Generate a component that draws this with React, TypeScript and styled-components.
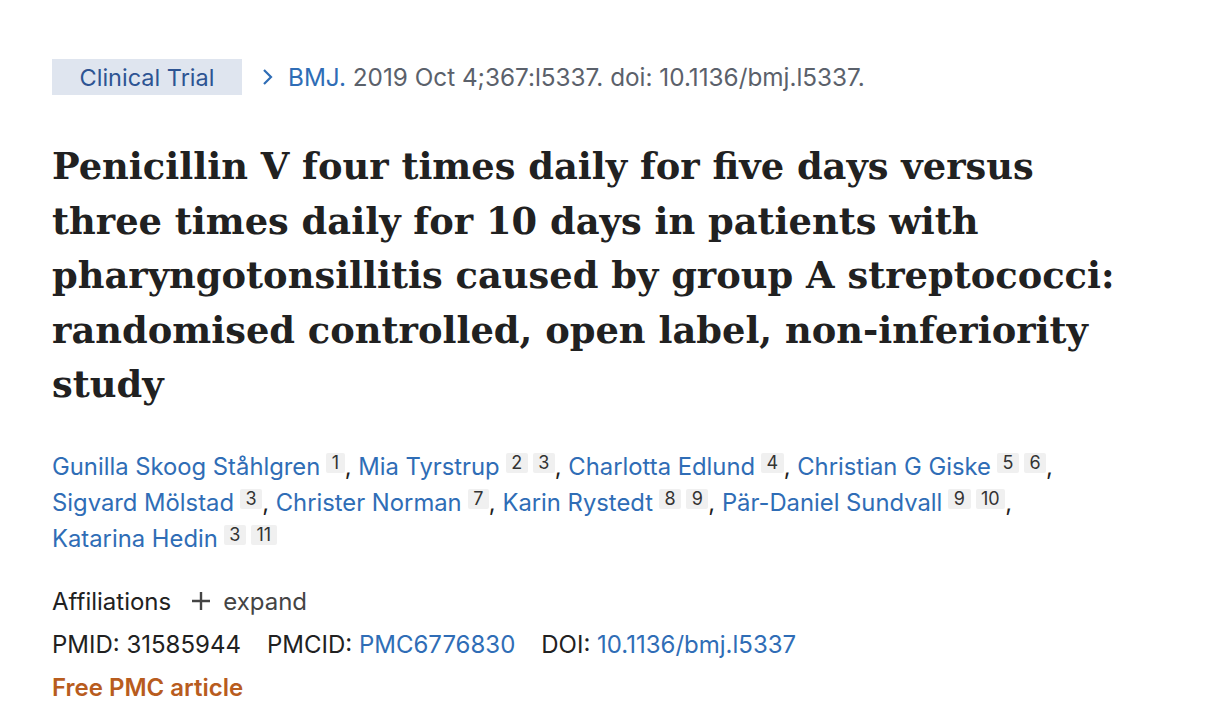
import React from "react";
import styled, { createGlobalStyle } from "styled-components";

const GlobalStyle = createGlobalStyle`
  body {
    margin: 0;
    background: #fff;
    font-family: Inter, "Noto Sans", sans-serif;
  }
`;

const Page = styled.div`
  padding: 59px 52px 0 52px;
  color: #212121;
`;

const HeadRow = styled.div`
  display: flex;
  align-items: center;
  gap: 20px;
  height: 36px;
`;

const Badge = styled.span`
  display: inline-flex;
  align-items: center;
  justify-content: center;
  width: 190px;
  height: 36px;
  background: #dfe5ef;
  color: #2d5493;
  font-size: 23.5px;
`;

const Citation = styled.div`
  display: flex;
  align-items: center;
  gap: 14px;
  font-size: 24.3px;
  color: #5b616b;
`;

const Link = styled.a`
  color: #2f6db6;
  text-decoration: none;
`;

const Title = styled.h1`
  margin: 44px 0 0 0;
  font-family: "DejaVu Serif", "Liberation Serif", serif;
  font-weight: 700;
  font-size: 36.8px;
  line-height: 54.6px;
  color: #212121;
  max-width: 1070px;
`;

const Authors = styled.div`
  margin-top: 37px;
  font-size: 23.8px;
  line-height: 36px;
  color: #212121;
  max-width: 1050px;
`;

const Author = styled.span`
  white-space: nowrap;
`;

const Sup = styled.span`
  display: inline-block;
  margin-left: 6px;
  padding: 0 5.5px;
  background: #f0f0f0;
  color: #333;
  font-size: 18px;
  line-height: 20px;
  border-radius: 2px;
  vertical-align: 6px;
  text-align: center;
  & + & {
    margin-left: 5px;
  }
`;

const Meta = styled.div`
  margin-top: 30px;
  display: flex;
  flex-direction: column;
  gap: 14px;
  font-size: 24px;
  line-height: 29px;
`;

const MetaRow = styled.div`
  display: flex;
  align-items: center;
  gap: 26px;
`;

const Expand = styled.span`
  display: inline-flex;
  align-items: center;
  gap: 12px;
  margin-left: -6px;
  color: #444;
`;

const FreeLink = styled.a`
  color: #b85c1e;
  font-weight: 600;
  text-decoration: none;
`;

const authors: [string, string[]][] = [
  ["Gunilla Skoog Ståhlgren", ["1"]],
  ["Mia Tyrstrup", ["2", "3"]],
  ["Charlotta Edlund", ["4"]],
  ["Christian G Giske", ["5", "6"]],
  ["Sigvard Mölstad", ["3"]],
  ["Christer Norman", ["7"]],
  ["Karin Rystedt", ["8", "9"]],
  ["Pär-Daniel Sundvall", ["9", "10"]],
  ["Katarina Hedin", ["3", "11"]],
];

export default function App() {
  return (
    <Page>
      <GlobalStyle />
      <HeadRow>
        <Badge>Clinical Trial</Badge>
        <Citation>
          <svg width="12" height="18" viewBox="0 0 12 18">
            <path d="M2 2 L9 9 L2 16" fill="none" stroke="#2f6db6" strokeWidth="2.2" />
          </svg>
          <span>
            <Link href="#">BMJ.</Link> 2019 Oct 4;367:l5337. doi: 10.1136/bmj.l5337.
          </span>
        </Citation>
      </HeadRow>
      <Title>
        Penicillin V four times daily for five days versus three times daily for 10 days in
        patients with pharyngotonsillitis caused by group A streptococci: randomised controlled,
        open label, non-inferiority study
      </Title>
      <Authors>
        {authors.map(([name, sups], i) => (
          <React.Fragment key={name}>
            <Author>
              <Link href="#">{name}</Link>
              {sups.map((s) => (
                <Sup key={s}>{s}</Sup>
              ))}
              {i < authors.length - 1 ? "," : ""}
            </Author>{" "}
          </React.Fragment>
        ))}
      </Authors>
      <Meta>
        <MetaRow>
          <span>Affiliations</span>
          <Expand>
            <svg width="20" height="20" viewBox="0 0 20 20">
              <path d="M10 1 V19 M1 10 H19" stroke="#444" strokeWidth="2.4" />
            </svg>
            expand
          </Expand>
        </MetaRow>
        <MetaRow>
          <span>PMID: 31585944</span>
          <span>
            PMCID: <Link href="#">PMC6776830</Link>
          </span>
          <span>
            DOI: <Link href="#">10.1136/bmj.l5337</Link>
          </span>
        </MetaRow>
        <FreeLink href="#">Free PMC article</FreeLink>
      </Meta>
    </Page>
  );
}
